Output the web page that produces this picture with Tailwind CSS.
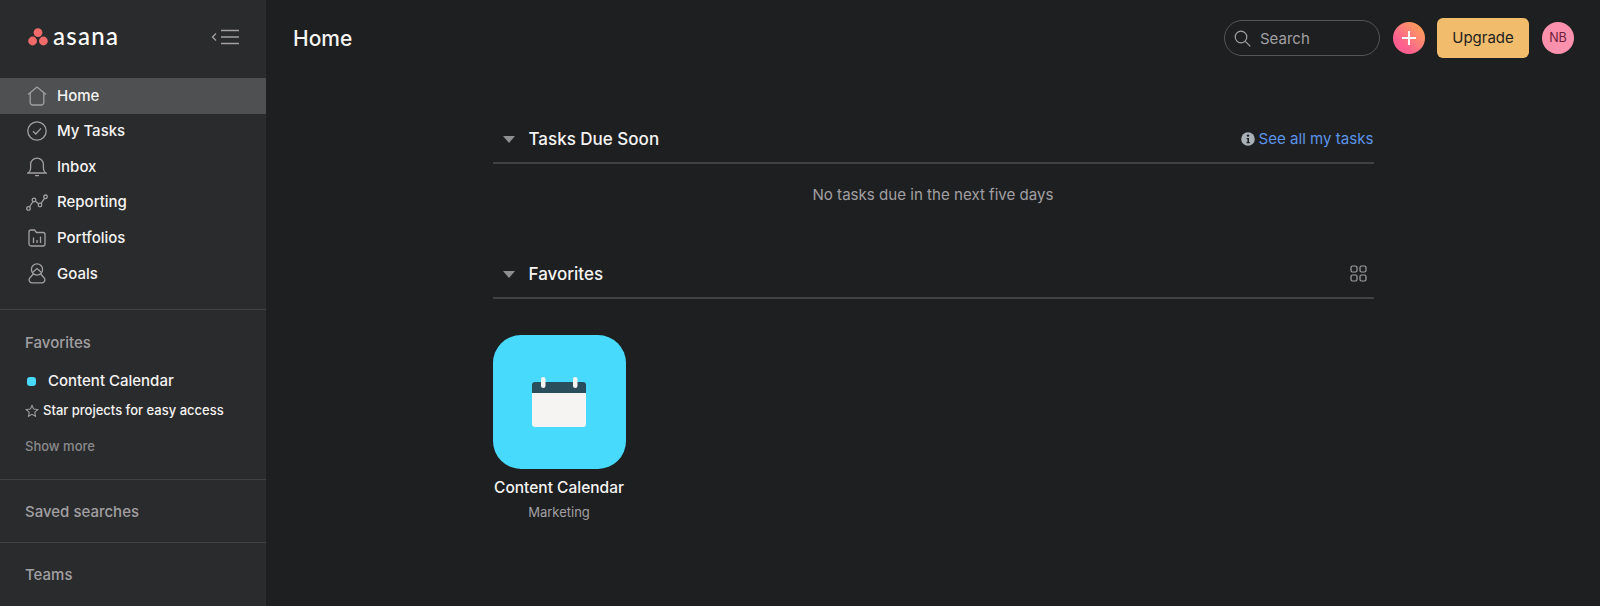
<!DOCTYPE html>
<html lang="en">
<head>
  <meta charset="UTF-8">
  <title>Home - Asana</title>
  <script src="https://cdn.jsdelivr.net/npm/@tailwindcss/browser@4"></script>
</head>
<body class="bg-[#1e1f21] font-['Inter',sans-serif] text-white">
  <div class="flex h-[606px] w-[1600px] overflow-hidden">
    <!-- Sidebar -->
    <aside class="w-[266px] shrink-0 bg-[#2a2b2d]">
      <div class="flex h-[78px] items-start justify-between pl-[28px] pr-[26px] pt-[26px]">
        <div class="flex items-start gap-[5px]">
          <svg class="mt-[2px] h-[18px] w-[20px]" viewBox="0 0 20 18"><circle cx="10" cy="4.6" r="4.4" fill="#f06a6a"/><circle cx="4.6" cy="13" r="4.4" fill="#f06a6a"/><circle cx="15.4" cy="13" r="4.4" fill="#f06a6a"/></svg>
          <span class="font-['Lato',sans-serif] text-[24px] leading-[20px] font-medium tracking-[1.3px]">asana</span>
        </div>
        <svg class="mt-[2px] h-[18px] w-[29px] text-[#a2a0a2]" viewBox="0 0 29 18" fill="none" stroke="currentColor" stroke-width="1.3"><path d="M5 5.5 1.5 9 5 12.5"/><path d="M10 2.5h18M10 9h18M10 15.5h18"/></svg>
      </div>
      <nav class="text-[15px] font-medium text-[#f5f4f3]">
        <a class="flex h-[35.6px] items-center gap-[10px] bg-[#4f5052] pl-[27px]">
          <svg class="h-[20px] w-[20px] text-[#a2a0a2]" viewBox="0 0 20 20" fill="none" stroke="currentColor" stroke-width="1.3"><path d="M1 8.5 10 1l9 7.5"/><path d="M3.2 7v9.5a2.5 2.5 0 0 0 2.5 2.5h8.6a2.5 2.5 0 0 0 2.5-2.5V7"/></svg>
          Home
        </a>
        <a class="flex h-[35.6px] items-center gap-[10px] pl-[27px]">
          <svg class="h-[20px] w-[20px] text-[#a2a0a2]" viewBox="0 0 20 20" fill="none" stroke="currentColor" stroke-width="1.3"><circle cx="10" cy="10" r="9.2"/><path d="m6 10.3 2.8 2.7L14 7.4"/></svg>
          My Tasks
        </a>
        <a class="flex h-[35.6px] items-center gap-[10px] pl-[27px]">
          <svg class="h-[20px] w-[20px] text-[#a2a0a2]" viewBox="0 0 20 20" fill="none" stroke="currentColor" stroke-width="1.3"><path d="M1 16c1.6-1 2.6-2.4 2.6-4.5V7.5a6.4 6.4 0 0 1 12.8 0v4c0 2.1 1 3.5 2.6 4.5z"/><path d="M8 18.6h4"/></svg>
          Inbox
        </a>
        <a class="flex h-[35.6px] items-center gap-[9px] pl-[26px]">
          <svg class="h-[18px] w-[22px] text-[#a2a0a2]" viewBox="0 0 22 18" fill="none" stroke="currentColor" stroke-width="1.3"><circle cx="2.5" cy="14.5" r="1.8"/><circle cx="8" cy="6" r="1.8"/><circle cx="14" cy="11" r="1.8"/><circle cx="19.5" cy="2.8" r="1.8"/><path d="m3.5 13 3.5-5.5M9.4 7.2l3.2 2.6M15 9.5l3.5-5.2"/></svg>
          Reporting
        </a>
        <a class="flex h-[35.6px] items-center gap-[11px] pl-[28px]">
          <svg class="h-[18px] w-[18px] text-[#a2a0a2]" viewBox="0 0 18 18" fill="none" stroke="currentColor" stroke-width="1.3"><path d="M1 3a2 2 0 0 1 2-2h3.5l2 2.5H15a2 2 0 0 1 2 2V15a2 2 0 0 1-2 2H3a2 2 0 0 1-2-2z"/><path d="M5.5 14V8.5M9 14v-3M12.5 14V7.5"/></svg>
          Portfolios
        </a>
        <a class="flex h-[35.6px] items-center gap-[11px] pl-[28px]">
          <svg class="h-[21px] w-[18px] text-[#a2a0a2]" viewBox="0 0 18 21" fill="none" stroke="currentColor" stroke-width="1.3"><circle cx="9" cy="6.5" r="5.6"/><path d="M5.5 10.8 2 14.7a3 3 0 0 0 2 5.1h10a3 3 0 0 0 2-5.1l-3.5-3.9"/><path d="M4.5 9.5 9 5.5l4.5 4"/></svg>
          Goals
        </a>
      </nav>
      <div class="mt-[17px] border-t border-[#424244] pl-[25px] pt-[24px] pb-[25px]">
        <h2 class="text-[15px] leading-[18px] font-medium text-[#a2a0a2]">Favorites</h2>
        <div class="mt-[21px] flex h-[18px] items-center gap-[12px] pl-[2px] text-[15px] font-medium text-[#f5f4f3]">
          <span class="h-[9px] w-[9px] rounded-[3px] bg-[#48dafd]"></span>
          Content Calendar
        </div>
        <div class="mt-[12px] flex h-[16px] items-center gap-[4px] text-[13px] font-medium text-[#f5f4f3]">
          <svg class="h-[14px] w-[14px] text-[#a2a0a2]" viewBox="0 0 24 24" fill="none" stroke="currentColor" stroke-width="1.8"><path d="m12 2.5 2.9 6.3 6.9.8-5.1 4.7 1.4 6.8-6.1-3.4-6.1 3.4 1.4-6.8-5.1-4.7 6.9-.8z"/></svg>
          Star projects for easy access
        </div>
        <div class="mt-[19px] text-[13px] leading-[16px] font-medium text-[#8b8a8c]">Show more</div>
      </div>
      <div class="flex h-[63px] items-center border-t border-[#424244] pl-[25px] pt-[3px] text-[15px] font-medium text-[#a2a0a2]">Saved searches</div>
      <div class="flex h-[63px] items-center border-t border-[#424244] pl-[25px] pt-[3px] text-[15px] font-medium text-[#a2a0a2]">Teams</div>
    </aside>

    <!-- Main -->
    <main class="min-w-0 flex-1">
      <header class="flex h-[76px] items-start pl-[27px] pr-[26px] pt-[18px]">
        <h1 class="mt-[7px] text-[21px] leading-[28px] font-medium text-[#f5f4f3]">Home</h1>
        <div class="ml-auto flex items-center">
          <div class="flex h-[36px] w-[156px] items-center gap-[9px] rounded-full border border-[#565557] pl-[9px] text-[15px] text-[#a2a0a2]">
            <svg class="h-[17px] w-[17px]" viewBox="0 0 17 17" fill="none" stroke="currentColor" stroke-width="1.2"><circle cx="7" cy="7" r="5.8"/><path d="m11.3 11.3 5 5"/></svg>
            <span class="pt-[3px]">Search</span>
          </div>
          <button class="ml-[13px] flex h-[32px] w-[32px] items-center justify-center rounded-full bg-gradient-to-tr from-[#fd5f8f] from-30% to-[#fba93e]">
            <svg class="h-[14px] w-[14px]" viewBox="0 0 14 14" stroke="white" stroke-width="2"><path d="M7 0v14M0 7h14"/></svg>
          </button>
          <button class="ml-[12px] h-[40px] w-[92px] rounded-[6px] bg-[#f1bd6c] text-[15px] text-[#1e1f21]">Upgrade</button>
          <div class="ml-[13px] flex h-[32px] w-[32px] items-center justify-center rounded-full bg-[#fc91ad] text-[12.5px] text-[#6d1e3a]">NB</div>
        </div>
      </header>

      <div class="mx-auto w-[881px] pt-[52px]">
        <section class="flex h-[36px] items-start justify-between border-b-2 border-[#424244]">
          <div class="flex items-center">
            <svg class="ml-[10px] h-[7px] w-[12px] text-[#8f8e90]" viewBox="0 0 12 7" fill="currentColor"><path d="M0 0h12L6 7z"/></svg>
            <h2 class="ml-[14px] text-[17px] leading-[22px] font-medium text-[#f5f4f3]">Tasks Due Soon</h2>
          </div>
          <div class="flex items-center gap-[4px] text-[15.1px] leading-[22px] text-[#5b94e8]">
            <svg class="h-[14px] w-[14px]" viewBox="0 0 14 14"><circle cx="7" cy="7" r="6.8" fill="#a9b1b8"/><circle cx="7" cy="3.6" r="1.2" fill="#1e1f21"/><path d="M5.6 6h2.4v4.2h1v1.1H5.4v-1.1h1V7.1h-.8z" fill="#1e1f21"/></svg>
            See all my tasks
          </div>
        </section>
        <p class="mt-[20px] text-center text-[15.1px] leading-[22px] text-[#a2a0a2]">No tasks due in the next five days</p>

        <section class="mt-[57px] flex h-[36px] items-start justify-between border-b-2 border-[#424244]">
          <div class="flex items-center">
            <svg class="ml-[10px] h-[7px] w-[12px] text-[#8f8e90]" viewBox="0 0 12 7" fill="currentColor"><path d="M0 0h12L6 7z"/></svg>
            <h2 class="ml-[14px] text-[17px] leading-[22px] font-medium text-[#f5f4f3]">Favorites</h2>
          </div>
          <svg class="mr-[7px] mt-[2px] h-[17px] w-[17px] text-[#a2a0a2]" viewBox="0 0 17 17" fill="none" stroke="currentColor" stroke-width="1.2"><rect x="1" y="1" width="6" height="6" rx="1.5"/><rect x="10" y="1" width="6" height="6" rx="1.5"/><rect x="1" y="10" width="6" height="6" rx="1.5"/><rect x="10" y="10" width="6" height="6" rx="1.5"/></svg>
        </section>

        <div class="mt-[36px] flex w-[133px] flex-col items-center">
          <div class="flex h-[134px] w-[133px] items-center justify-center rounded-[28px] bg-[#48dafd]">
            <svg class="h-[50px] w-[54px]" viewBox="0 0 54 50"><path d="M0 8a3 3 0 0 1 3-3h48a3 3 0 0 1 3 3v10H0z" fill="#2b4e5c"/><path d="M0 16h54v31a3 3 0 0 1-3 3H3a3 3 0 0 1-3-3z" fill="#f5f4f3"/><rect x="9" y="0" width="4.5" height="11" rx="2.2" fill="#f5f4f3"/><rect x="41" y="0" width="4.5" height="11" rx="2.2" fill="#f5f4f3"/></svg>
          </div>
          <div class="mt-[9px] whitespace-nowrap text-[15.5px] leading-[20px] font-medium text-[#f5f4f3]">Content Calendar</div>
          <div class="mt-[6px] text-[13px] leading-[16px] text-[#a2a0a2]">Marketing</div>
        </div>
      </div>
    </main>
  </div>
</body>
</html>
